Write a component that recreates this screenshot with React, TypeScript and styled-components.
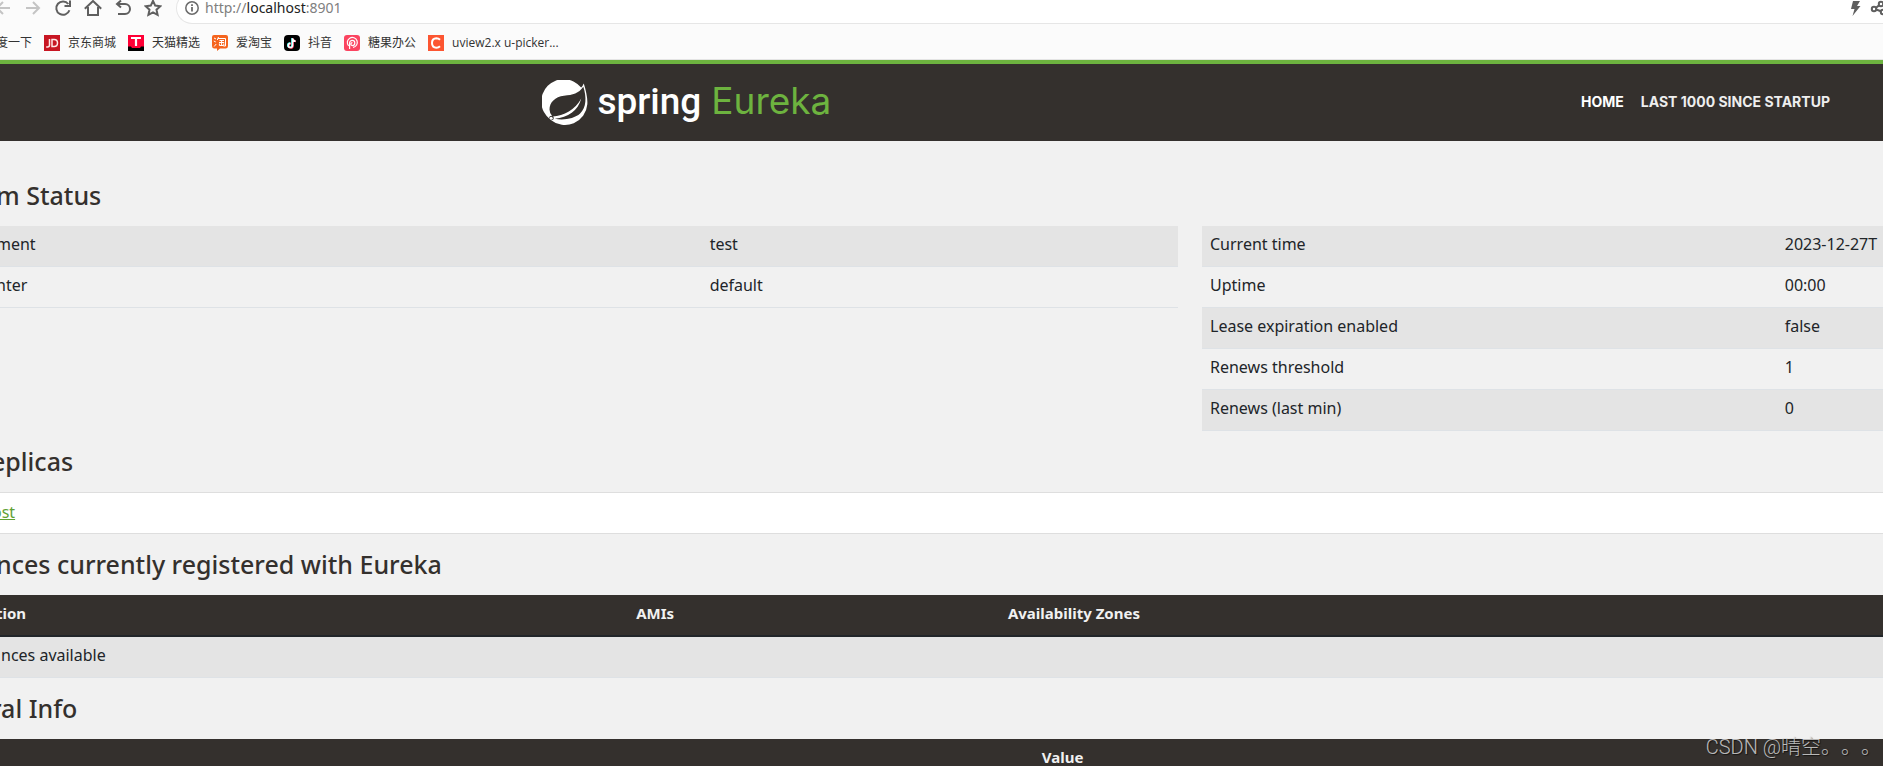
import React from 'react';
import styled, { createGlobalStyle } from 'styled-components';

const GlobalStyle = createGlobalStyle`
  *, *::before, *::after { box-sizing: border-box; }
  body {
    margin: 0;
    background: #f1f1f1;
    color: #212529;
    font-family: 'Noto Sans', 'Noto Sans CJK SC', sans-serif;
    font-size: 16px;
    line-height: 24px;
  }
`;

const Page = styled.div`
  position: relative;
  height: 100vh;
  overflow: hidden;
`;

/* Browser chrome */

const Toolbar = styled.div`
  display: flex;
  align-items: flex-end;
  height: 24px;
  background: #fbfbfb;
`;

const ToolButtons = styled.div`
  display: flex;
  align-items: center;
  gap: 12px;
  margin-left: -6px;
  padding-bottom: 7px;
`;

const ToolButton = styled.button`
  display: flex;
  padding: 0;
  border: 0;
  background: none;
  color: #5f5f5f;

  &:disabled { color: #c4c4c4; }
`;

const AddressBar = styled.div`
  display: flex;
  flex: 1;
  align-items: center;
  gap: 6px;
  height: 32px;
  margin-left: 14px;
  padding: 0 0 0 8px;
  border: 1px solid #e6e6e6;
  border-right: 0;
  border-radius: 16px 0 0 16px;
  background: #fff;
  color: #6b6b6b;
`;

const Address = styled.span`
  flex: 1;
  color: #808080;
  font-size: 14px;
  line-height: 16px;

  b { color: #222; font-weight: 400; }
`;

const AddressTools = styled.div`
  display: flex;
  gap: 8px;
  margin-right: -5px;
`;

const BookmarkBar = styled.nav`
  display: flex;
  align-items: center;
  gap: 12px;
  height: 36px;
  padding-top: 3px;
  margin-left: -4px;
  border-bottom: 1px solid #e4e4e4;
  background: #fbfbfb;
`;

const Bookmark = styled.a`
  display: flex;
  align-items: center;
  gap: 8px;
  color: #333;
  font-family: 'Open Sans', 'Noto Sans CJK SC', sans-serif;
  font-size: 12px;
  line-height: 16px;
  text-decoration: none;
  white-space: nowrap;
`;

/* Eureka page */

const Header = styled.header`
  display: grid;
  grid-template-columns: 541fr 1036fr auto;
  align-items: center;
  height: 81px;
  padding-right: 53px;
  border-top: 4px solid #6db33f;
  background: #34302d;
`;

const Brand = styled.a`
  display: flex;
  grid-column: 2;
  align-items: center;
  gap: 9px;
  color: #fff;
  text-decoration: none;
`;

const BrandWords = styled.span`
  display: flex;
  align-items: baseline;
  gap: 10px;
  padding-bottom: 3px;
  font-size: 37px;
  line-height: 44px;
`;

const BrandSpring = styled.span`
  font-family: Roboto, sans-serif;
  font-weight: 500;
`;

const BrandEureka = styled.span`
  color: #6db33f;
  font-family: Inter, sans-serif;
`;

const Nav = styled.nav`
  display: flex;
  gap: 17px;
  padding-bottom: 2px;
`;

const NavLink = styled.a<{ $active?: boolean }>`
  color: ${(p) => (p.$active ? '#fff' : '#eeeeee')};
  font-family: Inter, sans-serif;
  font-size: 14px;
  font-weight: 700;
  text-decoration: none;
  white-space: nowrap;
`;

const Main = styled.main`
  margin-left: -4px;
  padding-top: 24px;
`;

const Heading = styled.h1<{ $cut?: boolean }>`
  margin: 0;
  padding: 15px 0 16px;
  color: #34302d;
  font-size: 25px;
  font-weight: 500;
  line-height: 30px;
  text-indent: ${(p) => (p.$cut ? '-5px' : '0')};
`;

const StatusGrid = styled.div`
  display: grid;
  grid-template-columns: 1182fr 681fr;
  column-gap: 24px;
  align-items: start;
`;

const Table = styled.table<{ $bleed?: boolean }>`
  width: 100%;
  border-spacing: 0;
  table-layout: fixed;

  th, td {
    overflow: hidden;
    padding: 6px 8px 10px;
    text-align: left;
    white-space: nowrap;
  }
  td { border-bottom: 1px solid #dee2e6; }
  tbody tr:nth-child(odd) { background: #e4e4e4; }
  th {
    border-bottom: 2px solid #212529;
    background: #34302d;
    color: #f1f1f1;
    font-size: 15px;
    font-weight: 700;
  }
  tr > :first-child { padding-left: ${(p) => (p.$bleed ? '0' : '8px')}; }
`;

const Col = styled.col<{ $share?: number }>`
  width: ${(p) => (p.$share ? `${p.$share}%` : 'auto')};
`;

const EmptyCell = styled.td`
  text-indent: 5px;
`;

const Replicas = styled.ul`
  margin: 0;
  padding: 7px 0 9px;
  border: solid #dedede;
  border-width: 1px 0;
  background: #fff;
  list-style: none;
  text-indent: -4px;
`;

const ReplicaLink = styled.a`
  color: #5fa134;
`;

const Watermark = styled.div`
  position: absolute;
  right: 2px;
  bottom: 7px;
  color: rgba(225, 225, 225, 0.8);
  font-family: Roboto, 'Noto Sans CJK SC', sans-serif;
  font-size: 20px;
  font-weight: 300;
  text-shadow: 1px 1px 1px rgba(0, 0, 0, 0.6);
  text-spacing-trim: space-all;
`;

const Glyph = ({ children, width = 2 }: { children: React.ReactNode; width?: number }) => (
  <svg width="18" height="18" viewBox="0 0 18 18" fill="none" stroke="currentColor" strokeWidth={width}>
    {children}
  </svg>
);

const tools = [
  { label: 'Back', disabled: true, icon: <path d="M16 9H3M9 3L3 9l6 6" /> },
  { label: 'Forward', disabled: true, icon: <path d="M2 9h13M9 3l6 6-6 6" /> },
  { label: 'Reload', icon: <><path d="M15.4 11.2A6.7 6.7 0 1 1 14.3 5" /><path d="M16 1.5V7h-5.5" /></> },
  { label: 'Home', icon: <path d="M.8 9.800L9 2l8.200 7.800M4 8v8h10V8" /> },
  { label: 'Undo', icon: <path d="M7 1.500L3 5l4 3.500M3 5h8a5 5 0 0 1 0 10H4" /> },
  { label: 'Favourite', icon: <path d="M9 1.800l2.200 4.800 5.200.6-3.900 3.500 1.100 5.200L9 13.300l-4.600 2.600 1.100-5.200L1.600 7.200l5.200-.6z" /> },
];

const Favicon = ({ children }: { children: React.ReactNode }) => (
  <svg width="16" height="16" viewBox="0 0 16 16" aria-hidden="true">{children}</svg>
);

const bookmarks = [
  { name: '度一下', icon: null },
  {
    name: '京东商城',
    icon: (
      <Favicon>
        <rect width="16" height="16" fill="#c81623" />
        <path d="M5.500 4v6q0 2-2 2H2.200M8 4.600v7h2.200q3.300 0 3.300-3.500t-3.300-3.500z" fill="none" stroke="#ffe9e9" strokeWidth="1.500" />
      </Favicon>
    ),
  },
  {
    name: '天猫精选',
    icon: (
      <Favicon>
        <rect width="16" height="16" fill="#ff0036" />
        <path d="M0 11.500h3l1 1.500h8l1-1.500h3V16H0z" fill="#000" />
        <path d="M3 3h10M8 3v8" stroke="#fff" strokeWidth="2.200" />
      </Favicon>
    ),
  },
  {
    name: '爱淘宝',
    icon: (
      <Favicon>
        <path d="M2 0h12q2 0 2 2v9q0 2-2 2.500H8L5 16v-2.500H2Q0 13 0 11V2Q0 0 2 0z" fill="#f5641e" />
        <path d="M2 3l2 1M1.800 6l2 1M2.200 11.500L4.200 9M6.500 2L5.300 5M6 3.500h7.500v7.500h-2M7.500 5.500H12M7 7.500h5.200M9.600 5.500v5M7.400 8.500v2h4.400v-2" fill="none" stroke="#fff" />
      </Favicon>
    ),
  },
  {
    name: '抖音',
    icon: (
      <Favicon>
        <rect width="16" height="16" rx="4" fill="#000" />
        <g fill="none" strokeWidth="1.700">
          <path d="M8 3v7.300a2.100 2.100 0 1 1-2-2.200M8 3.500q.5 2.300 3 2.500" stroke="#25f4ee" />
          <path d="M9 3.600v7.300a2.100 2.100 0 1 1-2-2.200M9 4q.5 2.300 3 2.500" stroke="#fe2c55" />
          <path d="M8.500 3.200v7.300a2.100 2.100 0 1 1-2-2.200M8.500 3.700Q9 6 11.500 6.200" stroke="#fff" />
        </g>
      </Favicon>
    ),
  },
  {
    name: '糖果办公',
    icon: (
      <Favicon>
        <rect width="16" height="16" rx="3" fill="#fb4460" />
        <path d="M4.600 10.800A5 5 0 1 1 9 12.400M5.600 14V8a2.600 2.600 0 1 1 2.600 2.600q-1.300 0-1.300-1.500T8.400 7.600" fill="none" stroke="#fff" strokeWidth="1.200" />
      </Favicon>
    ),
  },
  {
    name: 'uview2.x u-picker...',
    icon: (
      <Favicon>
        <rect width="16" height="16" fill="#fc5531" />
        <path d="M12 4.800Q10.500 3.300 8.400 3.300 4 3.500 4 8t4.400 4.700q2.100 0 3.600-1.500" fill="none" stroke="#fff" strokeWidth="2" />
      </Favicon>
    ),
  },
];

const SpringLeaf = () => (
  <svg width="46" height="46" viewBox="0 0 46 46" aria-hidden="true">
    <path
      fill="#fff"
      d="M41.800 3.500q-1 2.300-2.600 4.100A22.400 22.400 0 1 0 8 39.300l.8.700A22.400 22.400 0 0 0 45.300 24.500C45.800 18.500 44.200 11.500 41.800 3.500z"
    />
    <path
      fill="#34302d"
      d="M41.300 6.700C36.500 13.500 31 14.700 22 15.700 13 16.700 7.500 22.500 7.500 29.500q0 4 3 7C22 36 33 30 39.300 18.600 36 31 26 37.300 12.800 38.800c9 1.600 19.500 0 25.300-5.300C44.500 27.500 44.700 17 41.300 6.700z"
    />
    <circle cx="9.500" cy="38" r="2.300" fill="#34302d" />
    <circle cx="9.200" cy="38.200" r="1.500" fill="#fff" />
  </svg>
);

const environment = [
  ['ment', 'test'],
  ['nter', 'default'],
];

const runtime = [
  ['Current time', '2023-12-27T'],
  ['Uptime', '00:00'],
  ['Lease expiration enabled', 'false'],
  ['Renews threshold', '1'],
  ['Renews (last min)', '0'],
];

const PairRows = ({ rows }: { rows: string[][] }) => (
  <tbody>
    {rows.map(([name, value]) => (
      <tr key={name}>
        <td>{name}</td>
        <td>{value}</td>
      </tr>
    ))}
  </tbody>
);

export default function App() {
  return (
    <Page>
      <GlobalStyle />
      <Toolbar>
        <ToolButtons>
          {tools.map((t) => (
            <ToolButton key={t.label} aria-label={t.label} disabled={t.disabled}>
              <Glyph>{t.icon}</Glyph>
            </ToolButton>
          ))}
        </ToolButtons>
        <AddressBar>
          <svg width="14" height="14" viewBox="0 0 14 14" fill="none" stroke="currentColor" strokeWidth="1.500" aria-hidden="true">
            <circle cx="7" cy="7" r="6.200" />
            <path d="M7 6v4.500M7 3.300v1.600" strokeWidth="1.800" />
          </svg>
          <Address>http://<b>localhost</b>:8901</Address>
          <AddressTools>
            <ToolButton aria-label="Speed mode">
              <svg width="14" height="18" viewBox="0 0 14 18" fill="currentColor">
                <path d="M5 2h7L9 7h3.500L4.500 17l2-7H3z" />
              </svg>
            </ToolButton>
            <ToolButton aria-label="Share">
              <Glyph>
                <circle cx="4" cy="10" r="2.200" />
                <circle cx="11" cy="5" r="2.200" />
                <circle cx="13" cy="13" r="2.200" />
                <path d="M6 8.700l3-2.300M6.200 10.500l4.700 1.700" />
              </Glyph>
            </ToolButton>
          </AddressTools>
        </AddressBar>
      </Toolbar>
      <BookmarkBar>
        {bookmarks.map((b) => (
          <Bookmark key={b.name} href="#">
            {b.icon}
            {b.name}
          </Bookmark>
        ))}
      </BookmarkBar>

      <Header>
        <Brand href="#">
          <SpringLeaf />
          <BrandWords>
            <BrandSpring>spring</BrandSpring>
            <BrandEureka>Eureka</BrandEureka>
          </BrandWords>
        </Brand>
        <Nav>
          <NavLink href="#" $active>HOME</NavLink>
          <NavLink href="#">LAST 1000 SINCE STARTUP</NavLink>
        </Nav>
      </Header>

      <Main>
        <Heading>m Status</Heading>
        <StatusGrid>
          <Table $bleed>
            <colgroup><Col $share={59.7} /><Col /></colgroup>
            <PairRows rows={environment} />
          </Table>
          <Table>
            <colgroup><Col $share={84.4} /><Col /></colgroup>
            <PairRows rows={runtime} />
          </Table>
        </StatusGrid>

        <Heading $cut>eplicas</Heading>
        <Replicas>
          <li><ReplicaLink href="#">ost</ReplicaLink></li>
        </Replicas>

        <Heading>nces currently registered with Eureka</Heading>
        <Table $bleed>
          <colgroup><Col $share={33.5} /><Col $share={19.7} /><Col /></colgroup>
          <thead>
            <tr><th>tion</th><th>AMIs</th><th>Availability Zones</th></tr>
          </thead>
          <tbody>
            <tr><EmptyCell colSpan={3}>nces available</EmptyCell></tr>
          </tbody>
        </Table>

        <Heading $cut>ral Info</Heading>
        <Table $bleed>
          <colgroup><Col $share={55} /><Col /></colgroup>
          <thead>
            <tr><th aria-label="Name" /><th>Value</th></tr>
          </thead>
        </Table>
      </Main>
      <Watermark>CSDN @晴空。。。</Watermark>
    </Page>
  );
}
